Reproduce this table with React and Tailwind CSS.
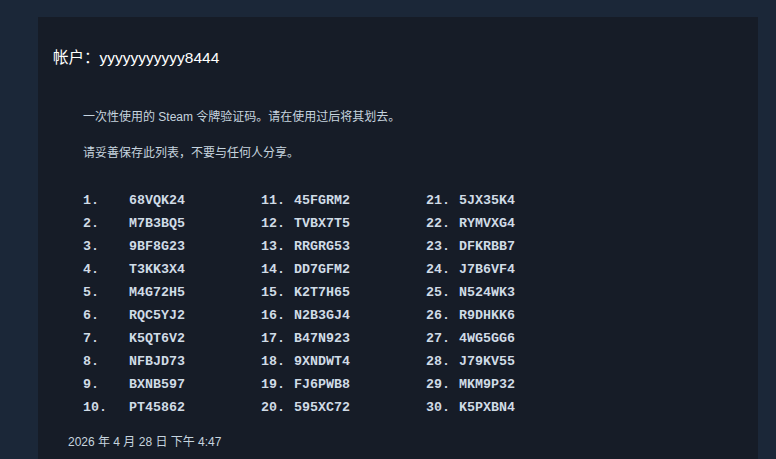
import React from "react";

const codes = [
  "68VQK24", "M7B3BQ5", "9BF8G23", "T3KK3X4", "M4G72H5",
  "RQC5YJ2", "K5QT6V2", "NFBJD73", "BXNB597", "PT45862",
  "45FGRM2", "TVBX7T5", "RRGRG53", "DD7GFM2", "K2T7H65",
  "N2B3GJ4", "B47N923", "9XNDWT4", "FJ6PWB8", "595XC72",
  "5JX35K4", "RYMVXG4", "DFKRBB7", "J7B6VF4", "N524WK3",
  "R9DHKK6", "4WG5GG6", "J79KV55", "MKM9P32", "K5PXBN4",
];

function CodeColumn({ start, numWidth, colWidth }) {
  return (
    <div className={colWidth}>
      {codes.slice(start, start + 10).map((c, i) => (
        <div key={c} className="flex h-[23px] items-center">
          <span className={numWidth}>{start + i + 1}.</span>
          <span>{c}</span>
        </div>
      ))}
    </div>
  );
}

export default function App() {
  return (
    <div
      className="min-h-screen bg-[#1b2738] pt-[17px]"
      style={{ fontFamily: '"Liberation Sans", "Noto Sans CJK SC", sans-serif' }}
    >
      <div className="ml-[38px] w-[720px] min-h-[460px] bg-[#161c27] pl-[15px] pt-[30px]">
        <div className="flex h-[22px] items-center text-[15.5px] text-white">
          <span>帐户：</span>
          <span>yyyyyyyyyyy8444</span>
        </div>

        <div className="mt-[39px] pl-[30px] text-[12px] leading-[18px] text-[#c6d4df]">
          <p>一次性使用的 Steam 令牌验证码。请在使用过后将其划去。</p>
          <p className="mt-[18px]">请妥善保存此列表，不要与任何人分享。</p>

          <div
            className="mt-[27px] flex text-[13.33px] font-bold text-[#d0dbe6]"
            style={{ fontFamily: '"Liberation Mono", monospace' }}
          >
            <CodeColumn start={0} numWidth="w-[46px]" colWidth="w-[178px]" />
            <CodeColumn start={10} numWidth="w-[33px]" colWidth="w-[165px]" />
            <CodeColumn start={20} numWidth="w-[33px]" colWidth="w-[165px]" />
          </div>
        </div>

        <div className="mt-[14px] pl-[15px] text-[12px] leading-[18px] text-[#c6d4df]">
          2026 年 4 月 28 日 下午 4:47
        </div>
      </div>
    </div>
  );
}
